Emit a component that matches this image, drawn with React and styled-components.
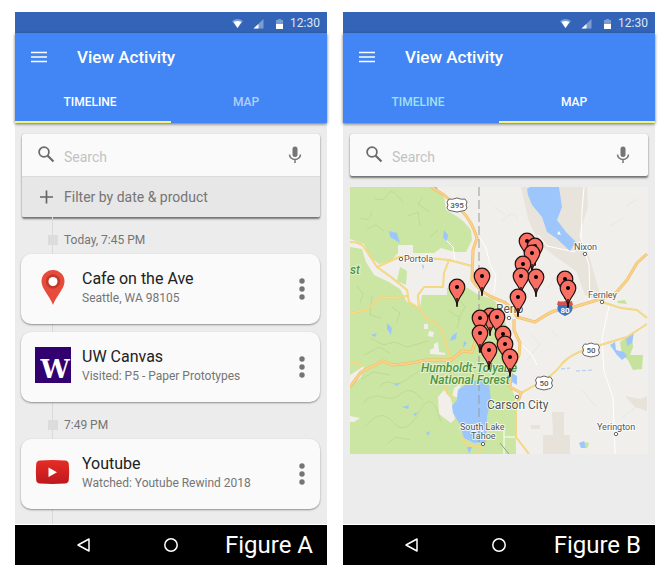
import React from "react";
import styled, { createGlobalStyle } from "styled-components";

const GlobalStyle = createGlobalStyle`
  *, *::before, *::after { box-sizing: border-box; }
  body {
    margin: 0;
    background: #fff;
    font-family: Roboto, "Liberation Sans", sans-serif;
  }
  button, input { font: inherit; }
`;

const Page = styled.main`
  display: flex;
  align-items: stretch;
  gap: 16px;
  padding: 12px 13px 12px 15px;
`;

const Phone = styled.section`
  flex: 1;
  min-width: 0;
  display: flex;
  flex-direction: column;
  background: #ececec;
`;

const StatusBar = styled.div`
  display: flex;
  align-items: center;
  justify-content: flex-end;
  height: 21px;
  padding: 2px 7px 0 0;
  background: #3364b8;
  color: #dce7f8;
  font-size: 12px;
  line-height: 19px;
`;

const StatusIcons = styled.svg`
  width: 52px;
  height: 12px;
  margin-right: 6px;
`;

const Header = styled.header`
  background: #4285f4;
  box-shadow: 0 1px 3px rgba(0, 0, 0, 0.55);
`;

const TitleBar = styled.div`
  display: flex;
  align-items: center;
  gap: 22px;
  height: 48px;
  padding-left: 8px;
`;

const Title = styled.h1`
  margin: 0;
  color: #fff;
  font-size: 17px;
  font-weight: 500;
  line-height: 24px;
`;

const IconButton = styled.button`
  display: flex;
  align-items: center;
  justify-content: center;
  flex: none;
  width: ${(p) => p.$width || 32}px;
  height: 32px;
  padding: 0;
  border: 0;
  background: none;
  cursor: pointer;
`;

const Tabs = styled.div`
  display: grid;
  grid-template-columns: 1fr 1fr;
`;

const Tab = styled.button`
  height: 42px;
  padding: 2px 6px 0 0;
  border: 0;
  border-bottom: 2px solid ${(p) => (p.$active ? "#f4f47c" : "transparent")};
  background: none;
  color: ${(p) => (p.$active ? "#fff" : p.$idle)};
  font-size: 12px;
  font-weight: 500;
  cursor: pointer;
`;

const Content = styled.div`
  flex: 1;
  display: flex;
  flex-direction: column;
  padding: 11px 7px 0;
`;

const SearchPanel = styled.div`
  border-radius: 2px;
  background: #fafafa;
  box-shadow: 0 2px 2px rgba(0, 0, 0, 0.5), 0 0 1px rgba(0, 0, 0, 0.3);
  overflow: hidden;
`;

const SearchRow = styled.label`
  display: flex;
  align-items: center;
  height: 42px;
  padding: 0 9px 0 14px;
`;

const SearchInput = styled.input`
  flex: 1;
  min-width: 0;
  margin-left: 8px;
  padding: 4px 0 0;
  border: 0;
  outline: 0;
  background: none;
  color: #616161;
  font-size: 14px;
  line-height: 20px;
  &::placeholder { color: #c2c2c2; opacity: 1; }
`;

const FilterButton = styled.button`
  display: flex;
  align-items: center;
  gap: 8px;
  width: 100%;
  height: 41px;
  padding: 0 14px;
  border: 0;
  border-top: 1px solid #dcdcdc;
  background: #e7e7e7;
  color: #757575;
  font-size: 14px;
  text-align: left;
  cursor: pointer;
`;

const Timeline = styled.div`
  flex: 1;
  margin: 0 0 0 -1px;
  padding-bottom: 15px;
  background: linear-gradient(#dadada, #dadada) 31px 0 / 1px 100% no-repeat;
`;

const TimeLabel = styled.h2`
  display: flex;
  align-items: center;
  gap: 6px;
  margin: 0;
  padding: 15px 0 6px 27px;
  color: #757575;
  font-size: 12px;
  font-weight: 400;
  line-height: 16px;
  &::before {
    content: "";
    width: 10px;
    height: 10px;
    background: #dcdcdc;
  }
`;

const Card = styled.article`
  display: flex;
  align-items: center;
  padding: 0 6px 0 14px;
  border-radius: 10px;
  background: #fafafa;
  box-shadow: 0 1px 2px rgba(0, 0, 0, 0.4);
  & + & { margin-top: 8px; }
`;

const CardIcon = styled.svg`
  flex: none;
  width: 36px;
  height: 36px;
  margin-bottom: 4px;
`;

const CardBody = styled.div`
  flex: 1;
  min-width: 0;
  padding: 14px 0 18px 11px;
`;

const CardTitle = styled.h3`
  margin: 0;
  color: #212121;
  font-size: 16px;
  font-weight: 400;
  line-height: 22px;
`;

const CardText = styled.p`
  margin: 0;
  color: #757575;
  font-size: 12px;
  line-height: 16px;
`;

const MapView = styled.svg`
  display: block;
  width: 100%;
  height: auto;
  margin-top: 11px;
`;

const NavBar = styled.nav`
  display: grid;
  grid-template-columns: 40px 40px 1fr;
  align-items: center;
  column-gap: 47px;
  height: 41px;
  padding: 0 14px 0 49px;
  border-top: 1px solid #fff;
  background: #000;
`;

const Caption = styled.span`
  color: #fff;
  font-size: 24px;
  line-height: 36px;
  text-align: right;
  white-space: nowrap;
  margin-left: -40px;
`;

const PinCardIcon = () => (
  <CardIcon viewBox="0 0 36 36" aria-hidden="true">
    <path d="M18 36C15.500 28 6.500 20 6.500 12.500a11.500 11.500 0 0 1 23 0C29.500 20 20.500 28 18 36Z" fill="#e84b3c" />
    <circle cx="18" cy="12.500" r="7.200" fill="#c0392b" />
    <circle cx="18" cy="12.500" r="4.500" fill="#fff" />
  </CardIcon>
);

const CanvasCardIcon = () => (
  <CardIcon viewBox="0 0 36 36" aria-hidden="true">
    <rect width="36" height="36" fill="#33006f" />
    <text x="20" y="31" textAnchor="middle" fontFamily="DejaVu Serif" fontWeight="700" fontSize="26" fill="#fff">W</text>
  </CardIcon>
);

const YoutubeCardIcon = () => (
  <CardIcon viewBox="0 0 36 36" aria-hidden="true">
    <defs>
      <linearGradient id="tube" x1="0" y1="0" x2="0" y2="1">
        <stop offset="0" stopColor="#e52d27" />
        <stop offset="1" stopColor="#bf171d" />
      </linearGradient>
    </defs>
    <path d="M5 6.500Q17.500 5.700 30 6.500Q33.400 6.800 33.800 10Q34.500 18 33.800 26Q33.400 29.200 30 29.500Q17.500 30.300 5 29.500Q1.600 29.200 1.200 26Q.5 18 1.200 10Q1.600 6.800 5 6.500Z" fill="url(#tube)" />
    <path d="M13.500 13.500 22 18.200 13.500 23Z" fill="#fff" />
  </CardIcon>
);

const MenuIcon = () => (
  <svg width="16" height="12" viewBox="0 0 16 12" aria-hidden="true">
    <path d="M0 1.500h16M0 6h16M0 10.500h16" stroke="#fff" strokeWidth="1.700" />
  </svg>
);

const SearchIcon = () => (
  <svg width="20" height="20" viewBox="0 0 20 20" aria-hidden="true">
    <circle cx="8" cy="7" r="4.900" fill="none" stroke="#6b6b6b" strokeWidth="1.800" />
    <path d="m11.500 10.500 6 6" stroke="#6b6b6b" strokeWidth="2.200" />
  </svg>
);

const MicIcon = () => (
  <svg width="14" height="18" viewBox="0 0 14 18" aria-hidden="true">
    <rect x="4.500" y="0.500" width="5" height="10.500" rx="2.500" fill="#757575" />
    <path d="M1.500 8.500a5.500 5 0 0 0 11 0M7 13.500v3.500" fill="none" stroke="#757575" strokeWidth="1.500" />
  </svg>
);

const PlusIcon = () => (
  <svg width="20" height="20" viewBox="0 0 20 20" aria-hidden="true">
    <path d="M4 10h13M10.500 3.500v13" stroke="#666" strokeWidth="1.700" />
  </svg>
);

const MoreIcon = () => (
  <svg width="6" height="22" viewBox="0 0 6 22" aria-hidden="true">
    <circle cx="3" cy="3" r="2.700" fill="#757575" />
    <circle cx="3" cy="11" r="2.700" fill="#757575" />
    <circle cx="3" cy="19" r="2.700" fill="#757575" />
  </svg>
);

const SignalIcons = () => (
  <StatusIcons viewBox="0 0 52 12" aria-hidden="true">
    <path d="M0 3Q5.500-1 11 3L5.500 10Z" fill="#7d9dd2" />
    <path d="M1.500 4Q5.500 2 9.500 4L5.500 10Z" fill="#fff" />
    <path d="M21.500 10.500 31.500 1v9.500Z" fill="#7d9dd2" />
    <path d="M21.500 10.500 26.500 6v4.500Z" fill="#fff" />
    <path d="M44 2h2V1h3v1h2v9h-7Z" fill="#7d9dd2" />
    <path d="M44 6h7v5h-7Z" fill="#fff" />
  </StatusIcons>
);

const roads = [
  "M0 55Q10 55 14 60L27 80 41 90 57 103 59 115 69 121 76 131Q87 136 92 143L101 173",
  "M27 80 49 70H66L99 73 122 79",
  "M99 73 94 86 93 100H74L68 108 69 121",
  "M0 126 17 123 31 110Q44 112 57 109",
  "M94 186 97 206 104 210M111 250 117 258 131 260 128 267",
  "M171 206Q184 199 194 193T211 178 234 163L254 157 277 150 297 137",
  "M252 115 271 121 287 123 297 131",
  "M0 175 14 178M166 220V250L179 267",
];

const highways = [
  "M81 0 94 8 111 23Q122 34 127 51L123 63 122 93Q131 107 149 113 160 116 167 130L185 135Q197 127 204 124L224 120 264 108 277 93 287 76 297 67",
  "M0 200 11 185 33 174 42 178Q60 177 76 173L101 173 112 164 122 165 128 146 150 122",
  "M164 132V143L170 156 169 168 161 186 160 200 171 206 166 220",
];

const pins = [
  [177, 54], [185, 59], [182, 66], [173, 77], [171, 89], [186, 90],
  [215, 92], [218, 101], [168, 110], [132, 89], [107, 100], [140, 129],
  [130, 131], [147, 130], [130, 146], [153, 147], [155, 157], [139, 163], [160, 170],
];

const towns = [
  [51, 72], [235, 67], [252, 115], [159, 131], [167, 210], [133, 257], [266, 247],
];

const lakes = [
  "M177 2 180 0H209L212 20 207 33 216 45 226 55 220 64 206 51 197 45 192 30 182 18 178 8Z",
  "M119 195 128 193 139 196 141 213 137 230 136 255 124 256 114 251 109 236 103 226 102 219 107 213 108 203Z",
  "M39 44 47 46 50 56 40 50ZM94 43 98 48 97 54 93 51ZM82 0H87L88 3ZM37 136 42 141 41 148 37 142ZM102 149 107 145 106 152 100 154ZM114 154 117 156 113 161ZM52 220 59 218 58 222ZM21 148 27 146 25 150ZM76 246 80 244 78 249ZM63 227 68 225 65 229ZM72 77 74 79 73 83ZM44 197 51 196 46 199ZM162 186 167 189 167 198 162 195ZM117 260 122 260 119 267Z",
  "M260 158 265 155 266 163 274 165 277 169 272 173 267 168ZM276 150 284 145 282 156 277 159ZM229 256 234 254 236 261 231 261Z",
];

const labels = [
  { x: 54, y: 75, size: 9, text: "Portola" },
  { x: 224, y: 63, size: 9, text: "Nixon" },
  { x: 238, y: 111, size: 9, text: "Fernley" },
  { x: 146, y: 126, size: 12, text: "Reno" },
  { x: 137, y: 222, size: 12, text: "Carson City" },
  { x: 110, y: 243, size: 9, text: "South Lake" },
  { x: 121, y: 252, size: 9, text: "Tahoe" },
  { x: 247, y: 243, size: 9, text: "Yerington" },
];

const shields = [[107, 18, "395", 20], [241, 163, "50", 17], [194, 196, "50", 17]];

const ActivityMap = () => (
  <MapView viewBox="0 0 298 267" role="img" aria-label="Activity map">
    <rect width="298" height="267" fill="#f1efeb" />
    <path d="M171 0H237L238 20 229 48 240 72 252 114 235 108 226 84 206 70 190 58 178 32Z" fill="#e8e4dc" />
    <path d="M202 225H214V248H220V267H193V248H203ZM181 238H190V242H181ZM275 209 290 212 297 209V224L285 220Z" fill="#e7e2da" />
    <path d="M0 0H82L94 10 96 23 108 30 114 35 121 43 122 53 116 65H105L91 61 84 66H63V58H48V66L42 73 29 77 20 70 14 57 0 52Z" fill="#cbe6a3" />
    <path d="M0 60 12 62 16 75 24 88 39 95 50 102 57 115 70 121 72 108H97V101H118L127 107 142 112 153 121 157 144 161 176V199L165 210 166 267H0Z" fill="#cbe6a3" />
    <path d="M50 80 57 84 56 98 47 94Z" fill="#cbe6a3" />
    <path d="M270 155 282 147 283 160 280 168H293L292 182 283 183 278 173 272 168ZM267 114 275 113 277 117 268 116ZM234 255 239 256 237 262Z" fill="#c5e39d" />
    <path d="M0 188 14 179 11 190 0 199ZM84 157 88 155 89 165 95 166V168L80 167V163L84 161ZM74 137H78V142H74ZM88 210 94 203 101 212 105 232 101 236 89 227ZM104 201 113 195 108 204 107 210H102ZM0 229 10 231 4 235H0ZM79 144 84 145 83 150 78 149Z" fill="#f2efeb" />
    <g fill="none" stroke="#b5d58b" strokeWidth="1" opacity="0.6">
      <path d="M25 12Q34 15 38 7T53 16M10 31Q20 36 22 25M58 29 68 25 70 39M7 99 13 107 10 116M22 109 20 128 31 131" />
      <path d="M20 151 34 158 44 155 57 160 78 154M14 168 29 160 40 166M29 200Q35 193 42 196T63 188 83 192M13 216Q22 206 33 210T52 206 73 213M15 240Q30 220 43 235T69 225 91 235M38 256 46 250 60 253M93 179 101 185 96 194M108 111 115 120 108 133" />
      <path d="M17 42 26 38 34 44M73 10 68 17 79 25M80 50 88 43M99 124 110 131 107 141M42 120 50 126 46 136M12 192 23 185 40 188" />
    </g>
    <g fill="none" stroke="#e9e7e2" strokeWidth="1">
      <path d="M145 20 155 28M276 19 288 12M260 39 273 31M152 35Q163 20 168 32M180 147 190 157 177 173M232 203 246 220M201 143 208 151M272 231 287 219M205 90 197 102" />
    </g>
    <g fill="none" stroke="#fff" strokeWidth="1">
      <path d="M96 53 103 60 105 74M130 51Q137 60 138 69T146 89L144 106M234 0 232 24 231 52 239 78 240 113M259 119 252 151 254 184 263 211 265 267M170 156 182 168 187 178M188 48 197 59 225 65M154 239V267M154 250H166" />
    </g>
    {lakes.map((d) => <path key={d} d={d} fill="#9dc7fc" />)}
    <path d="M207 47 209 44 211 48Z" fill="#fff" />
    <path d="M211 182 220 181M226 184 243 183" fill="none" stroke="#a8cbf5" strokeDasharray="4 2" />
    {roads.map((d) => (
      <g key={d} fill="none" strokeLinejoin="round">
        <path d={d} stroke="#f0d27e" strokeWidth="2" />
        <path d={d} stroke="#fbdc88" strokeWidth="1" />
      </g>
    ))}
    {highways.map((d) => (
      <g key={d} fill="none" strokeLinejoin="round">
        <path d={d} stroke="#eeba64" strokeWidth="3" />
        <path d={d} stroke="#fbd187" strokeWidth="2" />
      </g>
    ))}
    <path d="M129 0V235" stroke="#999" strokeDasharray="9 4" />
    <path d="M129 235V255M150 256 159 267" stroke="#999" />
    {towns.map(([x, y]) => (
      <circle key={x} cx={x} cy={y} r="1.700" fill="#fff" stroke="#666" strokeWidth="1" />
    ))}
    <g fill="#555" stroke="#fff" strokeWidth="2" strokeOpacity="0.8" paintOrder="stroke" strokeLinejoin="round">
      {labels.map((l) => <text key={l.text} x={l.x} y={l.y} fontSize={l.size}>{l.text}</text>)}
    </g>
    <g fill="#4e9440" stroke="#e4f2cf" strokeWidth="2" paintOrder="stroke" fontStyle="italic" fontSize="12" fontWeight="500">
      <text x="0" y="87">st</text>
      <text x="71" y="185">Humboldt-Toiyabe</text>
      <text x="80" y="197">National Forest</text>
    </g>
    {shields.map(([x, y, n, w]) => (
      <g key={y} transform={`translate(${x} ${y})`}>
        <path d={`M${-w / 2 + 2}-6Q${-w / 4}-5 0-7Q${w / 4}-5 ${w / 2 - 2}-6L${w / 2}-3 ${w / 2 - 1} 0 ${w / 2} 3Q${w / 2 - 1} 6 ${w / 4} 6L0 7 ${-w / 4} 6Q${-w / 2 + 1} 6 ${-w / 2} 3L${-w / 2 + 1} 0 ${-w / 2}-3Z`} fill="#fff" stroke="#666" strokeWidth="1" />
        <text y="3" textAnchor="middle" fontSize="8" fontWeight="500" fill="#555">{n}</text>
      </g>
    ))}
    <path d="M208 118Q206 124 211 127L215 129 219 127Q224 124 222 118Z" fill="#3d76c2" />
    <path d="M208 114Q212 115 215 114 219 115 222 114L223 118H207Z" fill="#d9534a" />
    <text x="215" y="126" textAnchor="middle" fontSize="8" fontWeight="700" fill="#fff">80</text>
    {pins.map(([x, y]) => (
      <g key={`${x}-${y}`} transform={`translate(${x} ${y})`}>
        <path d="M0 19C0 10-7.800 7-7.800 0a7.800 7.800 0 0 1 15.600 0C7.800 7 0 10 0 19Z" fill="#fa6f64" stroke="#1f0f0e" strokeWidth="1.200" />
        <path d="M0 11V20" stroke="#1f0f0e" strokeWidth="1.400" />
        <circle r="2" fill="#000" />
      </g>
    ))}
  </MapView>
);

const SearchField = ({ label }) => (
  <SearchRow>
    <SearchIcon />
    <SearchInput type="text" placeholder="Search" aria-label={label} />
    <IconButton type="button" aria-label="Voice search"><MicIcon /></IconButton>
  </SearchRow>
);

const PhoneFrame = ({ active, idle, caption, children }) => (
  <Phone>
    <StatusBar><SignalIcons />12:30</StatusBar>
    <Header>
      <TitleBar>
        <IconButton type="button" aria-label="Menu"><MenuIcon /></IconButton>
        <Title>View Activity</Title>
      </TitleBar>
      <Tabs role="tablist">
        {["TIMELINE", "MAP"].map((name) => (
          <Tab key={name} type="button" role="tab" aria-selected={active === name} $active={active === name} $idle={idle}>
            {name}
          </Tab>
        ))}
      </Tabs>
    </Header>
    <Content>{children}</Content>
    <NavBar>
      <IconButton type="button" $width={40} aria-label="Back">
        <svg width="16" height="16" viewBox="0 0 16 16" aria-hidden="true">
          <path d="M2 8 13 2v12Z" fill="none" stroke="#fff" strokeWidth="1.500" strokeLinejoin="round" />
        </svg>
      </IconButton>
      <IconButton type="button" $width={40} aria-label="Home">
        <svg width="16" height="16" viewBox="0 0 16 16" aria-hidden="true">
          <circle cx="8" cy="8" r="6.200" fill="none" stroke="#fff" strokeWidth="1.500" />
        </svg>
      </IconButton>
      <Caption>{caption}</Caption>
    </NavBar>
  </Phone>
);

const ActivityCard = ({ icon, title, text }) => (
  <Card>
    {icon}
    <CardBody>
      <CardTitle>{title}</CardTitle>
      <CardText>{text}</CardText>
    </CardBody>
    <IconButton type="button" $width={24} aria-label={`More options for ${title}`}><MoreIcon /></IconButton>
  </Card>
);

export default function App() {
  return (
    <>
      <GlobalStyle />
      <Page>
        <PhoneFrame active="TIMELINE" idle="#b3cefb" caption="Figure A">
          <SearchPanel>
            <SearchField label="Search timeline" />
            <FilterButton type="button"><PlusIcon />Filter by date &amp; product</FilterButton>
          </SearchPanel>
          <Timeline>
            <TimeLabel>Today, 7:45 PM</TimeLabel>
            <ActivityCard icon={<PinCardIcon />} title="Cafe on the Ave" text="Seattle, WA 98105" />
            <ActivityCard icon={<CanvasCardIcon />} title="UW Canvas" text="Visited: P5 - Paper Prototypes" />
            <TimeLabel>7:49 PM</TimeLabel>
            <ActivityCard icon={<YoutubeCardIcon />} title="Youtube" text="Watched: Youtube Rewind 2018" />
          </Timeline>
        </PhoneFrame>
        <PhoneFrame active="MAP" idle="#a0e0f0" caption="Figure B">
          <SearchPanel>
            <SearchField label="Search map" />
          </SearchPanel>
          <ActivityMap />
        </PhoneFrame>
      </Page>
    </>
  );
}
